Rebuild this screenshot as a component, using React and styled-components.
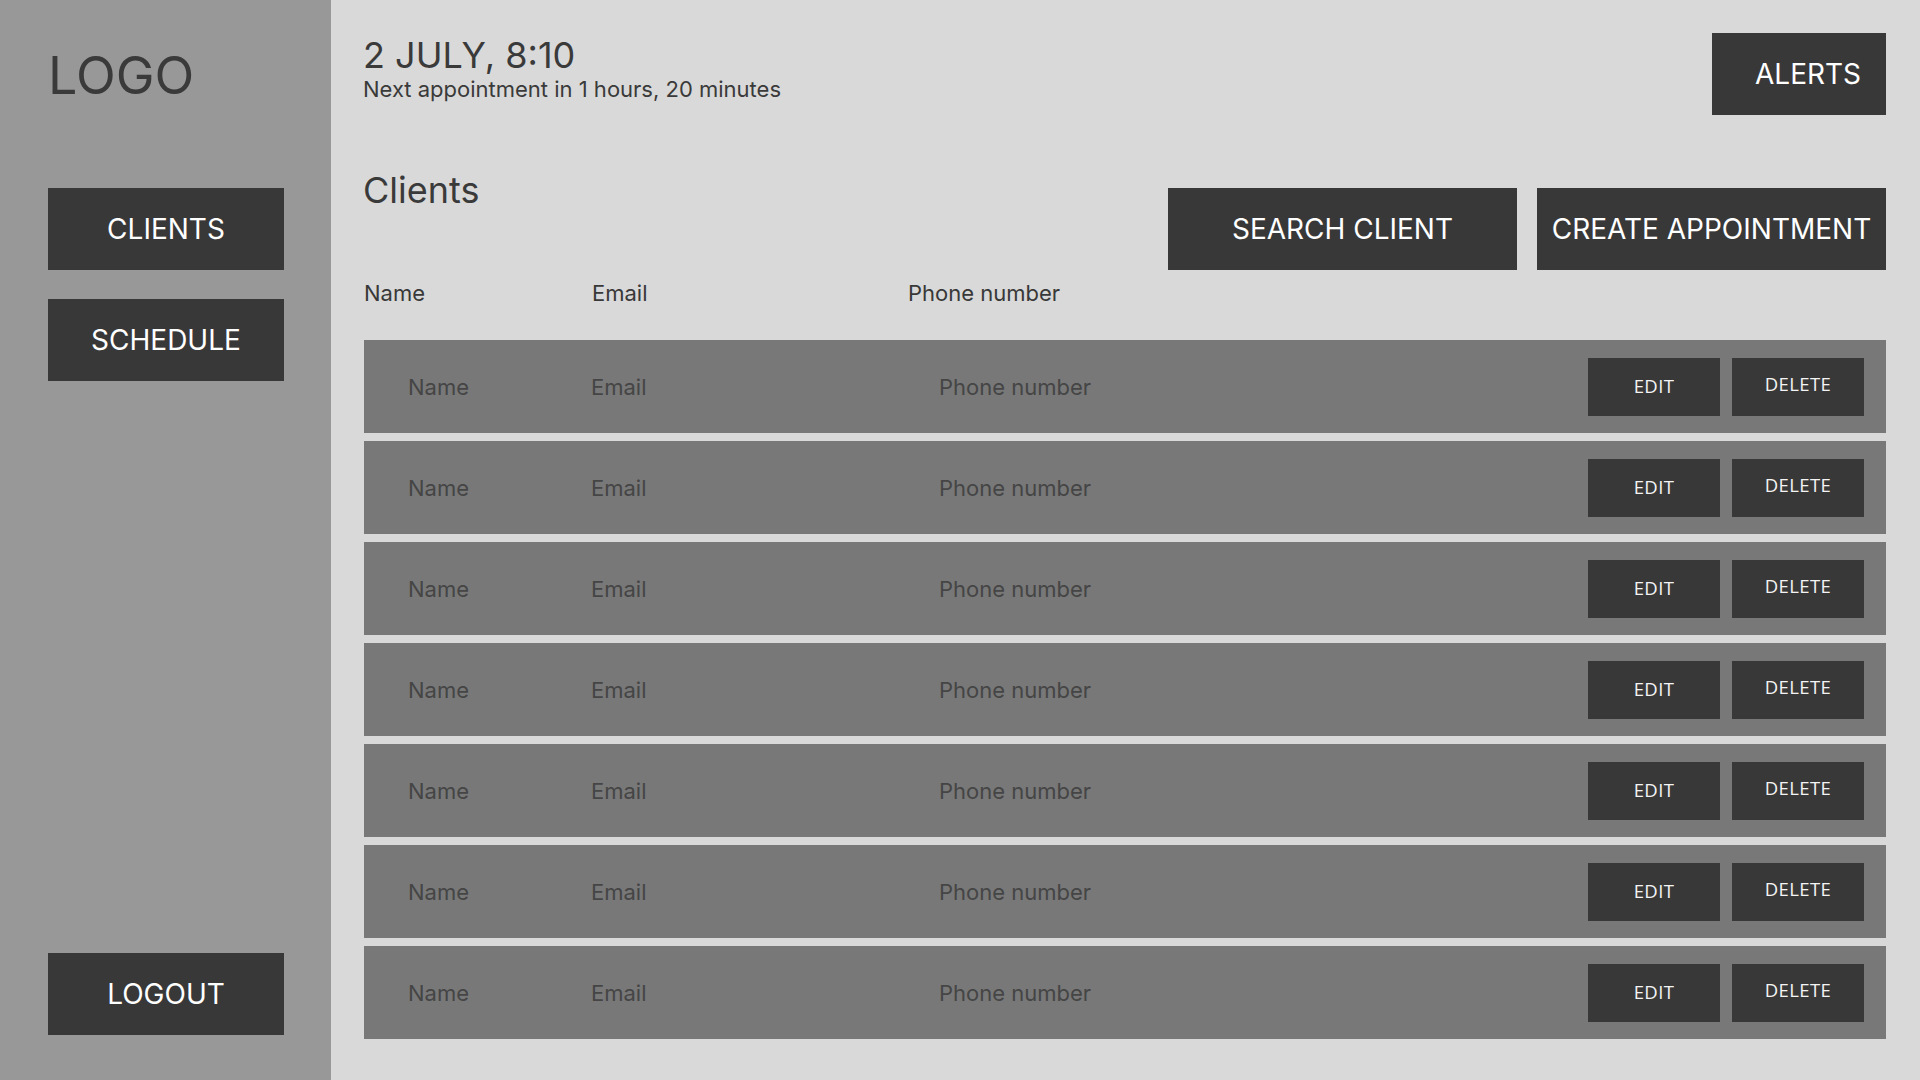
import React from "react";
import styled, { createGlobalStyle } from "styled-components";

// --- Global ---
const GlobalStyle = createGlobalStyle`
  html, body {
    margin: 0;
    padding: 0;
    background: #d9d9d9;
  }
  body {
    font-family: Inter, "Noto Sans", sans-serif;
  }
  * {
    box-sizing: border-box;
  }
`;

// --- Layout ---
const Page = styled.div`
  display: flex;
  width: 1920px;
  height: 1080px;
  overflow: hidden;
  background: #d9d9d9;
`;

const Sidebar = styled.aside`
  width: 331px;
  flex-shrink: 0;
  background: #989898;
  display: flex;
  flex-direction: column;
  padding: 50px 47px 45px 48px;
`;

const Logo = styled.div`
  font-size: 52px;
  line-height: 1;
  color: #3a3a3a;
  margin-bottom: 86px;
`;

const Nav = styled.nav`
  display: flex;
  flex-direction: column;
  gap: 29px;
`;

const DarkButton = styled.button`
  background: #383838;
  color: #ffffff;
  border: none;
  font-family: Inter, "Noto Sans", sans-serif;
  font-size: 28px;
  height: 82px;
  padding: 0;
  display: flex;
  align-items: center;
  justify-content: center;
  cursor: pointer;
`;

const SideButton = styled(DarkButton)`
  width: 236px;
`;

const LogoutButton = styled(SideButton)`
  margin-top: auto;
`;

const Main = styled.main`
  flex: 1;
  padding: 33px 34px 0 33px;
  display: flex;
  flex-direction: column;
`;

const Header = styled.header`
  display: flex;
  justify-content: space-between;
  align-items: flex-start;
`;

const DateBlock = styled.div`
  padding-top: 4px;
  margin-left: -1px;
  color: #3a3a3a;
`;

const DateText = styled.div`
  font-size: 36px;
  line-height: 36px;
`;

const NextText = styled.div`
  font-size: 22px;
  line-height: 26px;
  margin-top: 3px;
`;

const AlertsButton = styled(DarkButton)`
  width: 174px;
  justify-content: flex-start;
  padding-left: 43px;
`;

const Toolbar = styled.div`
  display: flex;
  align-items: flex-start;
  margin-top: 57px;
`;

const Title = styled.h2`
  margin: 0 0 0 -1px;
  font-weight: 400;
  font-size: 36px;
  line-height: 36px;
  color: #3a3a3a;
  flex: 1;
`;

const ToolbarActions = styled.div`
  display: flex;
  gap: 20px;
  margin-top: 16px;
`;

const ToolButton = styled(DarkButton)`
  width: 349px;
`;

const Columns = styled.div`
  display: grid;
  grid-template-columns: 228px 316px 1fr;
  font-size: 22px;
  line-height: 26px;
  color: #383838;
  margin-top: 10px;
  margin-bottom: 34px;
`;

const Rows = styled.div`
  display: flex;
  flex-direction: column;
  gap: 8px;
`;

const Row = styled.div`
  display: grid;
  grid-template-columns: 183px 348px 1fr auto;
  align-items: center;
  height: 93px;
  padding: 0 22px 0 44px;
  background: #787878;
  font-size: 22px;
  color: #454545;
`;

const RowActions = styled.div`
  display: flex;
  gap: 12px;
`;

const SmallButton = styled.button`
  width: 132px;
  height: 58px;
  border: none;
  background: #383838;
  color: #f4f4f4;
  font-family: "Open Sans", "Noto Sans", sans-serif;
  font-size: 18.5px;
  letter-spacing: 0.4px;
  padding: ${(p) => (p.$raised ? "0 0 6px" : "0 0 2px")};
  cursor: pointer;
`;

const clients = Array.from({ length: 7 }, (_, i) => ({
  id: i,
  name: "Name",
  email: "Email",
  phone: "Phone number",
}));

const App = () => {
  return (
    <>
      <GlobalStyle />
      <Page>
        <Sidebar>
          <Logo>LOGO</Logo>
          <Nav>
            <SideButton>CLIENTS</SideButton>
            <SideButton>SCHEDULE</SideButton>
          </Nav>
          <LogoutButton>LOGOUT</LogoutButton>
        </Sidebar>

        <Main>
          <Header>
            <DateBlock>
              <DateText>2 JULY, 8:10</DateText>
              <NextText>Next appointment in 1 hours, 20 minutes</NextText>
            </DateBlock>
            <AlertsButton>ALERTS</AlertsButton>
          </Header>

          <Toolbar>
            <Title>Clients</Title>
            <ToolbarActions>
              <ToolButton>SEARCH CLIENT</ToolButton>
              <ToolButton>CREATE APPOINTMENT</ToolButton>
            </ToolbarActions>
          </Toolbar>

          <Columns>
            <span>Name</span>
            <span>Email</span>
            <span>Phone number</span>
          </Columns>

          <Rows>
            {clients.map((c) => (
              <Row key={c.id}>
                <span>{c.name}</span>
                <span>{c.email}</span>
                <span>{c.phone}</span>
                <RowActions>
                  <SmallButton>EDIT</SmallButton>
                  <SmallButton $raised>DELETE</SmallButton>
                </RowActions>
              </Row>
            ))}
          </Rows>
        </Main>
      </Page>
    </>
  );
};

export default App;
